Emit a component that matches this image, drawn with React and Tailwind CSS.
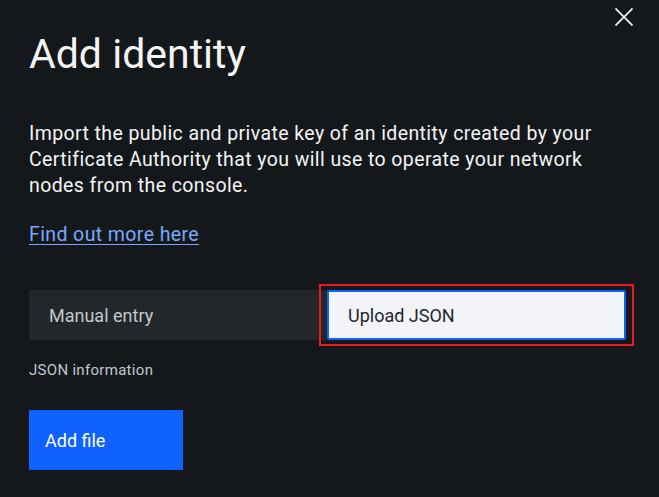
export default function App() {
  return (
    <div
      className="relative w-[659px] h-[497px] overflow-hidden bg-[#15181b] text-[#f4f4f4]"
      style={{ fontFamily: 'Roboto, "Liberation Sans", sans-serif' }}
    >
      <button className="absolute left-[615px] top-[8px] w-[18px] h-[18px]">
        <svg width="18" height="18" viewBox="0 0 18 18" fill="none" stroke="#f4f4f4" strokeWidth="1.7">
          <path d="M0.5 0.5 L17.5 17.5 M17.5 0.5 L0.5 17.5" />
        </svg>
      </button>

      <div className="pl-[29px] pt-[28px]">
        <h1 className="text-[41px] leading-[52px] font-normal">Add identity</h1>

        <p className="mt-[41px] w-[590px] text-[19.5px] leading-[26px] tracking-[0.4px]">
          Import the public and private key of an identity created by your Certificate Authority that you will use to operate your network nodes from the console.
        </p>

        <a className="block w-fit mt-[23px] text-[19.5px] leading-[26px] tracking-[0.4px] text-[#78a9ff] underline underline-offset-[3px]">
          Find out more here
        </a>

        <div className="mt-[42px] flex h-[50px]">
          <div className="w-[298px] shrink-0 flex items-center pl-[20px] bg-[#23272b] rounded-l-[3px] text-[18px] text-[#c1c7cd]">
            Manual entry
          </div>
          <div className="relative w-[299px] shrink-0">
            <div className="absolute -left-[8px] -top-[6px] -right-[8px] -bottom-[6px] border-2 border-[#e51c24]" />
            <div className="h-full flex items-center pl-[19px] bg-[#f2f4f8] border-2 border-[#0f62fe] rounded-[2px] text-[18px] text-[#21272a]">
              Upload JSON
            </div>
          </div>
        </div>

        <div className="mt-[21px] text-[15px] leading-[18px] tracking-[0.3px] text-[#c1c7cd]">JSON information</div>

        <button className="mt-[31px] w-[154px] h-[60px] flex items-center bg-[#0f62fe] pl-[16px] text-[18px] text-white">
          Add file
        </button>
      </div>
    </div>
  )
}
